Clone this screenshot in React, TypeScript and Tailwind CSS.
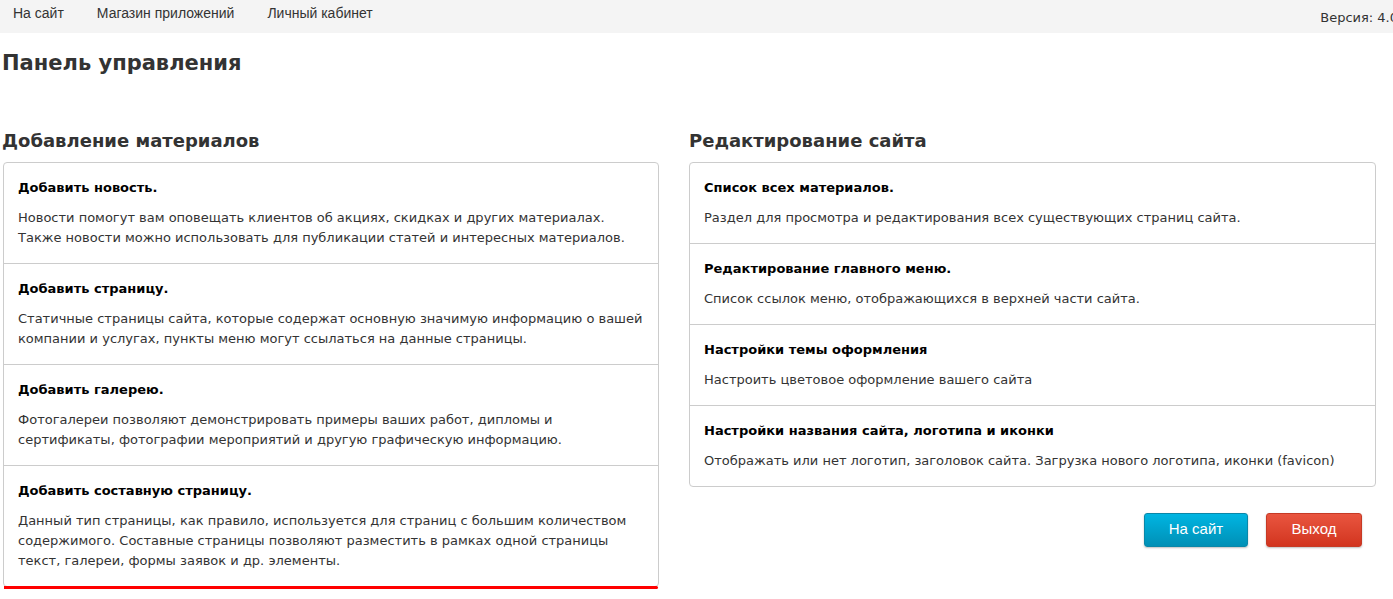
import React from "react";

type Item = {
  title: string;
  text: string;
};

const ADD_ITEMS: Item[] = [
  {
    title: "Добавить новость.",
    text: "Новости помогут вам оповещать клиентов об акциях, скидках и других материалах. Также новости можно использовать для публикации статей и интересных материалов.",
  },
  {
    title: "Добавить страницу.",
    text: "Статичные страницы сайта, которые содержат основную значимую информацию о вашей компании и услугах, пункты меню могут ссылаться на данные страницы.",
  },
  {
    title: "Добавить галерею.",
    text: "Фотогалереи позволяют демонстрировать примеры ваших работ, дипломы и сертификаты, фотографии мероприятий и другую графическую информацию.",
  },
  {
    title: "Добавить составную страницу.",
    text: "Данный тип страницы, как правило, используется для страниц с большим количеством содержимого. Составные страницы позволяют разместить в рамках одной страницы текст, галереи, формы заявок и др. элементы.",
  },
];

const EDIT_ITEMS: Item[] = [
  {
    title: "Список всех материалов.",
    text: "Раздел для просмотра и редактирования всех существующих страниц сайта.",
  },
  {
    title: "Редактирование главного меню.",
    text: "Список ссылок меню, отображающихся в верхней части сайта.",
  },
  {
    title: "Настройки темы оформления",
    text: "Настроить цветовое оформление вашего сайта",
  },
  {
    title: "Настройки названия сайта, логотипа и иконки",
    text: "Отображать или нет логотип, заголовок сайта. Загрузка нового логотипа, иконки (favicon)",
  },
];

const ItemList = ({ items }: { items: Item[] }) => (
  <div className="border border-[#cccccc] rounded-[4px] bg-white">
    {items.map((item, i) => (
      <div
        key={item.title}
        className={
          "px-[14px] pt-[15px] pb-[15px] " +
          (i > 0 ? "border-t border-[#cccccc]" : "")
        }
      >
        <div className="text-[13px] leading-[20px] font-bold text-black">{item.title}</div>
        <p className="mt-[10px] text-[13px] leading-[20px] text-[#333333]">{item.text}</p>
      </div>
    ))}
  </div>
);

export default function App() {
  return (
    <div className="w-[1393px] h-[599px] overflow-hidden bg-white font-['DejaVu_Sans',sans-serif]">
      <nav className="h-[33px] bg-[#f4f4f4] flex items-center overflow-hidden font-['Liberation_Sans',Arial,sans-serif] text-[14px] text-[#333333]">
        <div className="flex gap-[33px] pl-[13px] -mt-[7px]">
          <span>На сайт</span>
          <span>Магазин приложений</span>
          <span>Личный кабинет</span>
        </div>
        <span className="ml-auto -mr-[5px] shrink-0 font-['DejaVu_Sans',sans-serif] text-[13px] -mb-[3px] whitespace-nowrap">
          Версия: 4.0
        </span>
      </nav>

      <h1 className="mt-[18px] ml-[2px] text-[21px] leading-[25px] font-bold text-[#333333]">
        Панель управления
      </h1>

      <div className="mt-[54px] flex gap-[30px] pl-[3px]">
        <section className="w-[656px] shrink-0">
          <h2 className="-ml-[1px] text-[18px] leading-[22px] font-bold text-[#333333]">
            Добавление материалов
          </h2>
          <div className="mt-[10px]">
            <ItemList items={ADD_ITEMS} />
            <div className="h-[3px] bg-[#ff0000] -mt-[1px] mx-[1px] rounded-r-[2px]" />
          </div>
        </section>

        <section className="w-[687px] shrink-0">
          <h2 className="text-[18px] leading-[22px] font-bold text-[#333333]">
            Редактирование сайта
          </h2>
          <div className="mt-[10px]">
            <ItemList items={EDIT_ITEMS} />
          </div>
          <div className="mt-[26px] flex justify-end gap-[18px] pr-[14px] font-['Liberation_Sans',Arial,sans-serif]">
            <button className="w-[104px] h-[34px] rounded-[3px] border border-[#0a87a8] bg-gradient-to-b from-[#00b5e2] to-[#0090b6] text-white text-[15px] leading-[18px] pb-[2px] shadow-[0_1px_2px_rgba(0,0,0,0.25)]">
              На сайт
            </button>
            <button className="w-[96px] h-[34px] rounded-[3px] border border-[#c63a25] bg-gradient-to-b from-[#e9553f] to-[#d2341e] text-white text-[15px] leading-[18px] pb-[2px] shadow-[0_1px_2px_rgba(0,0,0,0.25)]">
              Выход
            </button>
          </div>
        </section>
      </div>
    </div>
  );
}
